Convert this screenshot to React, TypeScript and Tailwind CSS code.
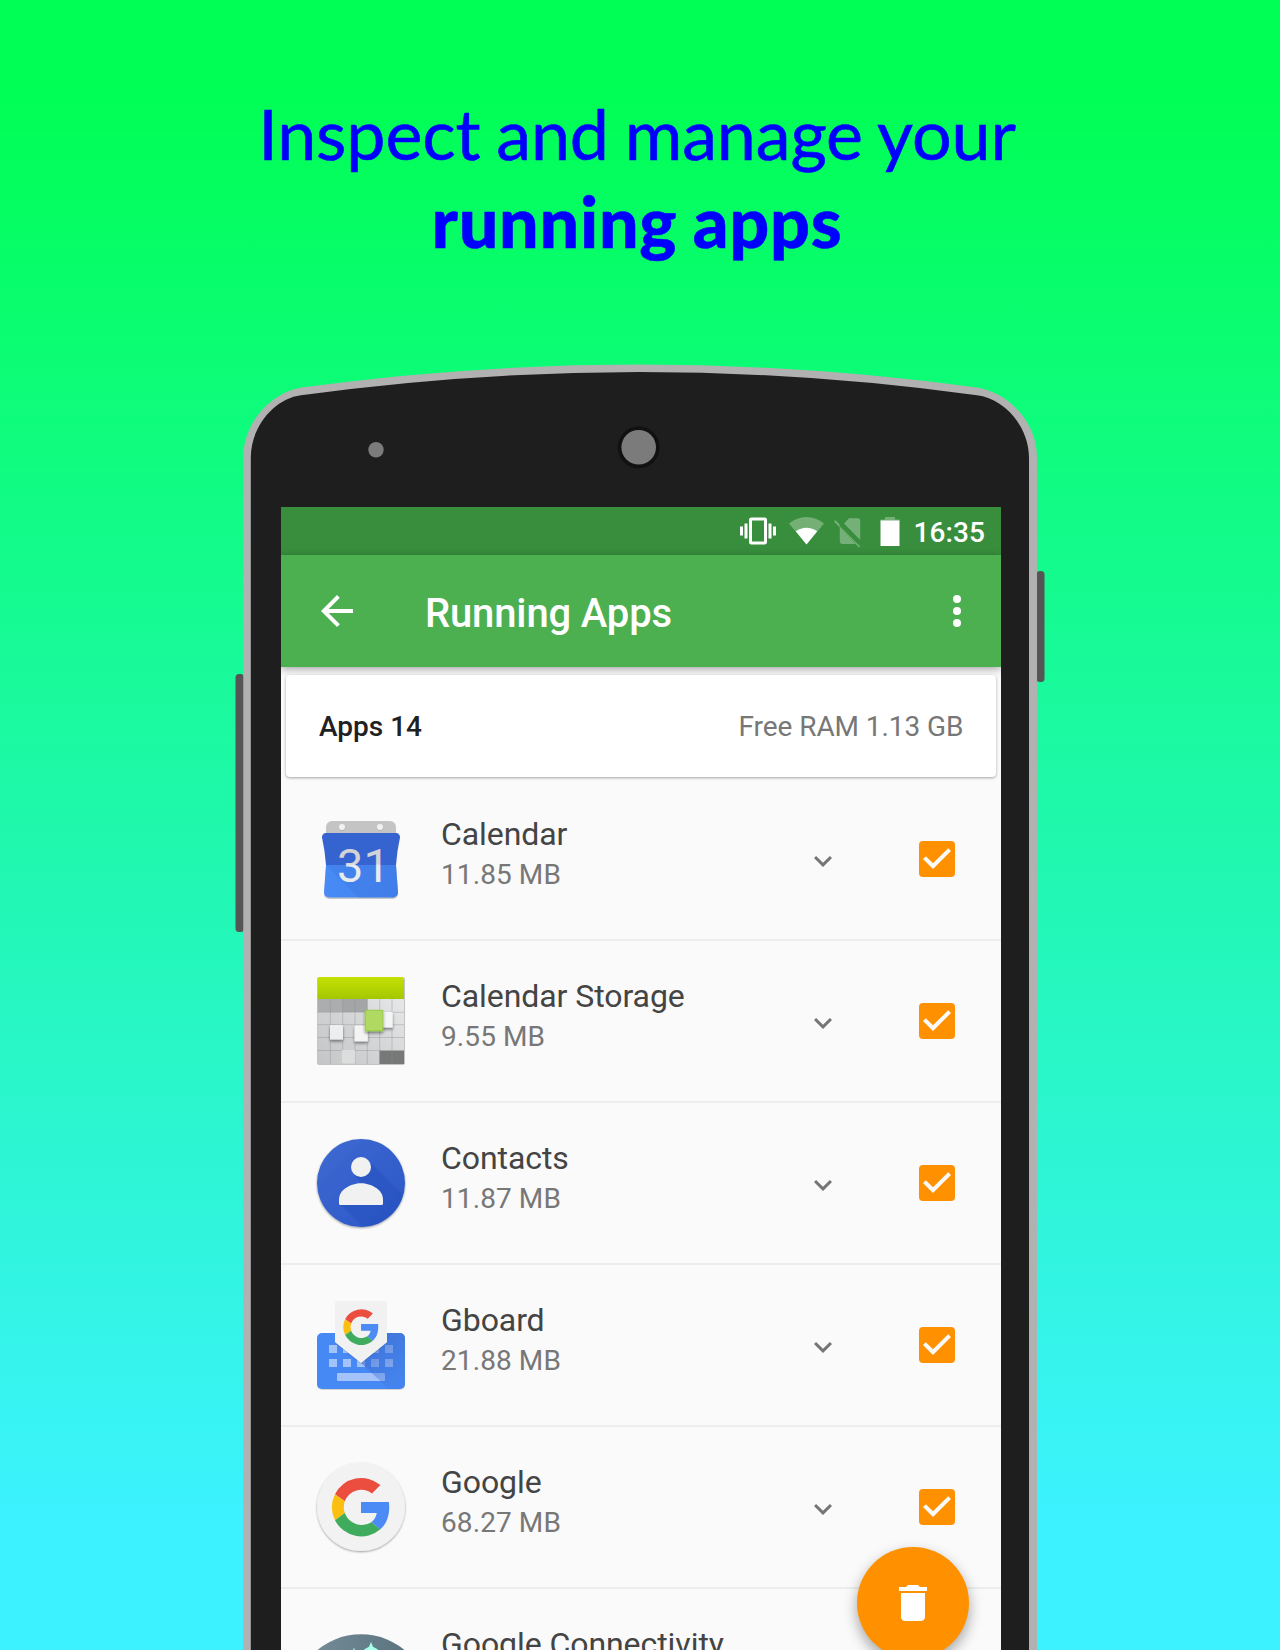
import React from 'react';

function GoogleG({ transform }: { transform?: string }) {
  return (
    <g transform={transform}>
      <path fill="#ea4335" fillOpacity=".95" d="M22 35.3A29.4 29.4 0 0 1 67.4 26L59 34.4A17.5 17.5 0 0 0 31.8 42.2Z" />
      <path fill="#fbbc05" fillOpacity=".95" d="M22 35.3A29.4 29.4 0 0 0 22 61.2L31.8 54A17.5 17.5 0 0 1 31.8 42.2Z" />
      <path fill="#34a853" fillOpacity=".95" d="M22 61.2A29.4 29.4 0 0 0 67.4 70.3L58.3 63.2A18 18 0 0 1 31.8 54Z" />
      <path fill="#4285f4" fillOpacity=".95" d="M48 43H75.9C77.2 53.500 74.700 64 67.400 70.300L58.300 63.200C61.500 60.900 63.200 57.500 63.800 54H48Z" />
    </g>
  );
}

function CalendarIcon() {
  return (
    <svg viewBox="0 0 96 96" className="size-24 shrink-0">
      <defs>
        <linearGradient id="calLow" x1="0" y1="0" x2="1" y2="0">
          <stop offset="0" stopColor="#488bf6" />
          <stop offset="1" stopColor="#4382ee" />
        </linearGradient>
        <linearGradient id="calDigits" x1="0" y1="0" x2="0" y2="1">
          <stop offset=".45" stopColor="#d2d3d6" />
          <stop offset=".5" stopColor="#e8eaee" />
        </linearGradient>
      </defs>
      <path d="M13 30V16a6 6 0 0 1 6-6h58a6 6 0 0 1 6 6v14z" fill="#c4c4c4" />
      <circle cx="29.300" cy="17" r="3" fill="#b2b2b2" />
      <circle cx="67.300" cy="17" r="3" fill="#b2b2b2" />
      <circle cx="29" cy="16" r="3" fill="#f1f1f1" />
      <circle cx="67" cy="16" r="3" fill="#f1f1f1" />
      <path d="M13 55 11 83a5 5 0 0 0 5 5h64a5 5 0 0 0 5-5l-2-28z" fill="#000" fillOpacity=".2" />
      <path d="M13 54 11 81.500a5 5 0 0 0 5 5h64a5 5 0 0 0 5-5L83 54z" fill="url(#calLow)" />
      <path d="M13 54l32 32.500h35a5 5 0 0 0 5-5L83 54z" fill="#3c74dd" fillOpacity=".3" />
      <path d="M13 22h70a4 4 0 0 1 4 4.600Q84 40 83 54H13Q12 40 9 26.600A4 4 0 0 1 13 22z" fill="#3563cf" />
      <text x="24" y="71.300" fontSize="47" fontWeight="400" fill="url(#calDigits)" className="font-['Roboto',sans-serif]">31</text>
    </svg>
  );
}

function StorageIcon() {
  return (
    <svg viewBox="0 0 96 96" className="size-24 shrink-0">
      <defs>
        <linearGradient id="stTop" x1="0" y1="0" x2="0" y2="1">
          <stop offset="0" stopColor="#c5e000" />
          <stop offset="1" stopColor="#a3c802" />
        </linearGradient>
        <linearGradient id="stGrid" x1="1" y1="0" x2="0" y2="1">
          <stop offset="0" stopColor="#eceeee" />
          <stop offset=".5" stopColor="#d6d7d8" />
          <stop offset="1" stopColor="#c4c5c6" />
        </linearGradient>
        <filter id="stShadow" x="-50%" y="-50%" width="200%" height="200%">
          <feDropShadow dx="0" dy="2" stdDeviation="1.500" floodOpacity=".45" />
        </filter>
      </defs>
      <rect x="4" y="4" width="88" height="88" rx="2.500" fill="#000" fillOpacity=".22" />
      <rect x="4.600" y="4" width="86.400" height="87" rx="2" fill="url(#stGrid)" />
      <path d="M4.600 26H54.300V39H4.600z" fill="#acadae" />
      <path d="M29.700 26H54.300V39H29.700z" fill="#9c9d9e" fillOpacity=".5" />
      <path d="M66.500 77.700H91V91H66.500z" fill="#777878" />
      <path d="M17.300 26V91M29.700 26V91M42 26V91M54.300 26V91M66.700 26V91M79 26V91M4.600 51.700H91M4.600 64.500H91M4.600 77.500H91M4.600 39.300H91" stroke="#8b8c8c" strokeOpacity=".38" fill="none" />
      <path d="M4.600 26V6a2 2 0 0 1 2-2h82.400a2 2 0 0 1 2 2v20z" fill="url(#stTop)" />
      <rect x="29" y="77" width="13" height="13.500" fill="#dcdddd" />
      <g filter="url(#stShadow)">
        <rect x="17" y="52" width="13" height="14.500" fill="#eeeeee" />
        <rect x="41.500" y="52.500" width="13.300" height="15.800" fill="#f4f4f4" />
        <rect x="68" y="39" width="11.700" height="15.500" fill="#f4f5f5" />
      </g>
      <rect x="52.300" y="37.300" width="17.500" height="20.500" fill="#afd961" stroke="#98cb45" filter="url(#stShadow)" />
    </svg>
  );
}

function ContactsIcon() {
  return (
    <svg viewBox="0 0 96 96" className="size-24 shrink-0 overflow-visible">
      <defs>
        <linearGradient id="conBg" x1="0" y1="0" x2="1" y2="1">
          <stop offset="0" stopColor="#3f6ad2" />
          <stop offset="1" stopColor="#2a56c6" />
        </linearGradient>
        <clipPath id="conClip"><circle cx="48" cy="48" r="44" /></clipPath>
        <filter id="icShadow" x="-20%" y="-20%" width="140%" height="140%">
          <feDropShadow dx="0" dy="1" stdDeviation="1" floodOpacity=".4" />
        </filter>
      </defs>
      <circle cx="48" cy="48" r="44" fill="url(#conBg)" filter="url(#icShadow)" />
      <path clipPath="url(#conClip)" d="M55 25 95 65V96H54L27 69 48 48 41 39z" fill="#2450bd" fillOpacity=".5" />
      <circle cx="48" cy="32" r="10" fill="#f1f1f1" />
      <path d="M26 64.500C26 54.500 38 48.200 48 48.200S70 54.500 70 64.500V68.500a1.500 1.500 0 0 1-1.500 1.500H27.500a1.500 1.500 0 0 1-1.500-1.500z" fill="#f1f1f1" />
    </svg>
  );
}

function GboardIcon() {
  return (
    <svg viewBox="0 0 96 96" className="size-24 shrink-0">
      <defs>
        <linearGradient id="gbShade" x1="0" y1="0" x2=".8" y2="1">
          <stop offset="0" stopColor="#3a66c4" stopOpacity=".75" />
          <stop offset="1" stopColor="#3f73d8" stopOpacity=".2" />
        </linearGradient>
      </defs>
      <rect x="4" y="37" width="88" height="56" rx="5" fill="#000" fillOpacity=".15" />
      <rect x="4" y="36" width="88" height="56" rx="5" fill="#4688f4" />
      <g fill="#a3c3fa">
        <path d="M16 48h8v8h-8zM30 48h8v8h-8zM58 48h8v8h-8zM72 48h8v8h-8zM16 62h8v8h-8zM30 62h8v8h-8zM44 62h8v8h-8zM58 62h8v8h-8zM72 62h8v8h-8z" />
        <rect x="24" y="76" width="48" height="8" rx="1" />
      </g>
      <path d="M74 36H87a5 5 0 0 1 5 5V87a5 5 0 0 1-5 5H76L48 66 74 46z" fill="url(#gbShade)" />
      <path d="M22 46.300V7h52V46.300L48 67z" fill="#000" fillOpacity=".15" />
      <path d="M25 4h46a3 3 0 0 1 3 3V45.300L48 66 22 45.300V7a3 3 0 0 1 3-3z" fill="#f1f1f1" />
      <GoogleG transform="translate(18.700 .700) scale(.611)" />
    </svg>
  );
}

function GoogleIcon() {
  return (
    <svg viewBox="0 0 96 96" className="size-24 shrink-0 overflow-visible">
      <circle cx="48" cy="48" r="44" fill="#f2f2f2" filter="url(#icShadow)" />
      <GoogleG />
    </svg>
  );
}

function ConnectivityIcon() {
  return (
    <svg viewBox="0 0 96 96" className="size-24 shrink-0 overflow-visible">
      <defs>
        <linearGradient id="cnBg" x1="0" y1="0" x2="1" y2="0">
          <stop offset="0" stopColor="#78909c" />
          <stop offset="1" stopColor="#546e7a" />
        </linearGradient>
      </defs>
      <circle cx="48" cy="81.300" r="68" fill="url(#cnBg)" />
      <path d="M58 21l2 4.800L65 28.500l-4 2.500h-7L51 28.500l5-2.700zM41 26.500l1.200 3.500h-2.400z" fill="#a7ffeb" />
    </svg>
  );
}

const apps = [
  { name: 'Calendar', size: '11.85 MB', Icon: CalendarIcon },
  { name: 'Calendar Storage', size: '9.55 MB', Icon: StorageIcon },
  { name: 'Contacts', size: '11.87 MB', Icon: ContactsIcon },
  { name: 'Gboard', size: '21.88 MB', Icon: GboardIcon },
  { name: 'Google', size: '68.27 MB', Icon: GoogleIcon },
  { name: 'Google Connectivity', size: '', Icon: ConnectivityIcon },
];

function AppRow({ name, size, Icon }: (typeof apps)[number]) {
  return (
    <li className="flex h-[162px] items-center border-b-2 border-[#ededed] pl-8">
      <Icon />
      <div className="ml-8 flex-1 pb-[9px]">
        <div className="text-[32px] leading-[40px] tracking-[-0.07px] text-[#444]">{name}</div>
        <div className="mt-px h-[40px] text-[28px] leading-[40px] tracking-[0.1px] text-[#777]">{size}</div>
      </div>
      <svg viewBox="0 0 24 24" className="mt-[4px] mr-[72px] size-[36px] fill-[#757575]">
        <path d="M7.410 8.590 12 13.170l4.590-4.580L18 10l-6 6-6-6z" />
      </svg>
      <svg viewBox="0 0 24 24" className="mr-10 size-12">
        <rect x="3" y="3" width="18" height="18" rx="2" fill="#ff9100" />
        <path d="M10 17l-5-5 1.410-1.410L10 14.170l7.590-7.590L19 8z" fill="#fafafa" />
      </svg>
    </li>
  );
}

function StatusBar() {
  return (
    <div className="flex h-[48px] items-center bg-[#388e3c] pr-4 text-white">
      <svg viewBox="0 0 24 24" className="ml-auto size-[36px] fill-current">
        <path d="M0 15h2V9H0zM3 17h2V7H3zM22 9v6h2V9zM19 17h2V7h-2zM16.500 3h-9C6.670 3 6 3.670 6 4.500v15c0 .830.670 1.500 1.500 1.500h9c.830 0 1.500-.670 1.500-1.500v-15c0-.830-.670-1.500-1.500-1.500zM16 19H8V5h8z" />
      </svg>
      <svg viewBox="0 0 36 36" className="ml-[12px] size-[36px] fill-current">
        <path fillOpacity=".3" d="M18.500 31.500 1 10.500C11 1.700 26 1.700 36 10.500z" />
        <path d="M18.500 31.500 7.800 18.300C14 13.500 23 13.500 29.200 18.300z" />
      </svg>
      <svg viewBox="0 0 36 36" className="ml-2 size-[36px] fill-current opacity-30">
        <path d="M7.500 13 28.300 33.500 27 34.500 2 8.500 3.300 7 7.500 11.300zM12 10.500 17 5.300H25.800a2.400 2.400 0 0 1 2.400 2.400V27zM7.800 14.500V28.500a2.400 2.400 0 0 0 2.400 2.400H24z" />
      </svg>
      <svg viewBox="0 0 20 36" className="ml-[12px] h-[36px] w-5 fill-current">
        <path fillOpacity=".3" d="M5 4h10v2.500h4.500V8H.500V6.500H5z" />
        <path d="M.500 7.500H19.500V33H.500z" />
      </svg>
      <span className="ml-[13px] pt-1 text-[28px] leading-none font-medium tracking-[0.1px]">16:35</span>
    </div>
  );
}

function PhoneShell() {
  return (
    <svg viewBox="0 0 816 1290" className="absolute top-[360px] left-[232px] h-[1290px] w-[816px]">
      <g transform="translate(-232 -360)">
        <rect x="235.500" y="674" width="8.500" height="258" rx="3.500" fill="#555" />
        <rect x="1036.500" y="571" width="8" height="111" rx="3.500" fill="#555" />
        <path d="M243.300 1650V457C243.300 422 272 391.500 303.300 387.300Q640 341.700 975 387.300C1008 391.500 1037 422 1037 457V1650z" fill="#b1b1b1" />
        <path d="M250.800 1650V458C250.800 426 275 398.500 301 395.300Q640 348.700 977 395.300C1004 398.500 1029 426 1029 458V1650z" fill="#1e1e1e" />
        <circle cx="376" cy="449.700" r="7.700" fill="#7b7b7b" />
        <circle cx="638.700" cy="447.300" r="21" fill="#111" />
        <circle cx="638.700" cy="447.300" r="17.300" fill="#7b7b7b" />
      </g>
    </svg>
  );
}

export default function App() {
  return (
    <div className="relative flex h-[1650px] w-[1280px] flex-col items-center overflow-hidden bg-[linear-gradient(to_bottom,#00ff54_0px,#00ff54_90px,#3cf2ff_1520px,#3cf2ff_1650px)] font-['Roboto',sans-serif]">
      <h1 className="h-[507px] pt-[89px] pr-[6px] text-center font-['Lato',sans-serif] text-[70px] leading-[88px] font-normal text-[#0000ff]">
        <span className="tracking-[-0.130px] [word-spacing:-2px] [-webkit-text-stroke:0.600px_#0000ff]">Inspect and manage your</span>
        <br />
        <span className="font-black tracking-[0.750px] [word-spacing:-2px] [-webkit-text-stroke:0.500px_#0000ff]">running apps</span>
      </h1>
      <PhoneShell />
      <main className="relative ml-[2px] w-[720px] flex-1 overflow-hidden bg-[#fafafa]">
        <StatusBar />
        <header className="relative flex h-[112px] items-center bg-[#4caf50] pr-5 pl-8 text-white shadow-[0_2px_8px_rgba(0,0,0,0.35)]">
          <svg viewBox="0 0 24 24" className="size-12 fill-current">
            <path d="M20 11H7.830l5.590-5.590L12 4l-8 8 8 8 1.410-1.410L7.830 13H20z" />
          </svg>
          <span className="ml-16 flex-1 pt-[6px] text-[40px] leading-none font-medium tracking-[-0.150px]">Running Apps</span>
          <svg viewBox="0 0 24 24" className="size-12 fill-current">
            <circle cx="12" cy="6" r="2" />
            <circle cx="12" cy="12" r="2" />
            <circle cx="12" cy="18" r="2" />
          </svg>
        </header>
        <section className="relative mr-[5.500px] ml-[5px] mt-2 flex h-[102px] items-center justify-between rounded bg-white pr-8 pl-[33px] pt-[2px] text-[28px] shadow-[0_1px_3px_rgba(0,0,0,0.35)]">
          <span className="font-medium text-[#212121]">Apps 14</span>
          <span className="tracking-[-0.060px] text-[#777]">Free RAM 1.13 GB</span>
        </section>
        <ul className="mt-[2px]">
          {apps.map((app) => (
            <AppRow key={app.name} {...app} />
          ))}
        </ul>
        <button
          aria-label="Delete"
          className="absolute top-[1040px] right-8 flex size-28 items-center justify-center rounded-full bg-[#ff9100] shadow-[0_6px_14px_rgba(0,0,0,0.35)]"
        >
          <svg viewBox="0 0 24 24" className="size-12 fill-white">
            <path d="M6 19c0 1.100.900 2 2 2h8c1.100 0 2-.900 2-2V7H6zM19 4h-3.500l-1-1h-5l-1 1H5v2h14z" />
          </svg>
        </button>
      </main>
    </div>
  );
}
